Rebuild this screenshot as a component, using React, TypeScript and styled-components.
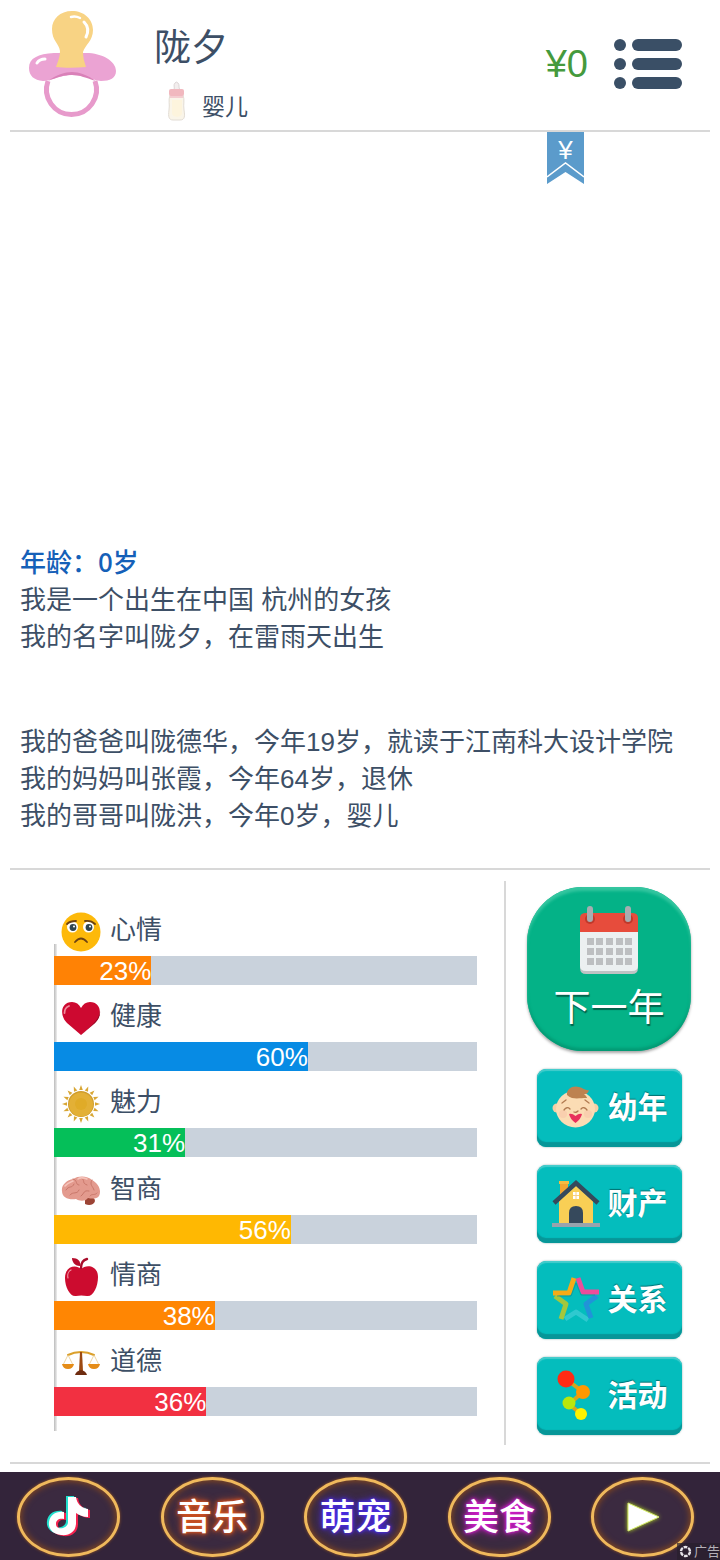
import React from "react";
import styled, { createGlobalStyle } from "styled-components";

const GlobalStyle = createGlobalStyle`
  * {
    box-sizing: border-box;
  }

  body {
    margin: 0;
    background-color: #fff;
    color: #3d4f66;
    font-family: "Liberation Sans", "Noto Sans CJK SC", sans-serif;
  }

  h1, h2, p {
    margin: 0;
  }

  button {
    padding: 0;
    border: none;
    font-family: inherit;
    cursor: pointer;
  }

  svg {
    display: block;
    flex-shrink: 0;
  }
`;

const Page = styled.div`
  display: flex;
  flex-direction: column;
  min-height: 100vh;
`;

const Header = styled.header`
  display: flex;
  align-items: center;
  height: 132px;
  margin: 0 10px;
  padding: 0 28px 2px 16px;
  border-bottom: 2px solid #d8d8d8;
`;

const Profile = styled.div`
  display: flex;
  flex-direction: column;
  gap: 8px;
  flex: 1;
  padding: 18px 0 0 36px;
`;

const Name = styled.h1`
  font-size: 37px;
  line-height: 48px;
  font-weight: 400;
`;

const Stage = styled.div`
  display: flex;
  align-items: flex-end;
  gap: 15px;
  padding-left: 12px;
  font-size: 23px;
  line-height: 28px;
`;

const Money = styled.span`
  margin-right: 26px;
  font-size: 38px;
  line-height: 48px;
  color: #459a3d;
`;

const MenuButton = styled.button`
  background: none;
`;

const Log = styled.main`
  display: flex;
  flex-direction: column;
  flex: 1;
  margin: 0 10px;
  padding: 0 10px 33px;
  border-bottom: 2px solid #d8d8d8;
`;

const RibbonButton = styled.button`
  align-self: flex-end;
  margin-right: 116px;
  background: none;
`;

const Story = styled.section`
  margin-top: auto;
  font-size: 26px;
  line-height: 37px;
`;

const Age = styled.h2`
  padding-bottom: 6px;
  font-family: "Noto Sans CJK SC", sans-serif;
  font-size: 26px;
  line-height: 31px;
  font-weight: 500;
  color: #1560b8;
`;

const Family = styled.div`
  margin-top: 68px;
`;

const Panel = styled.section`
  display: flex;
  margin: 0 10px;
  padding: 11px 0 17px;
  border-bottom: 2px solid #d8d8d8;
`;

const Stats = styled.div`
  position: relative;
  display: flex;
  flex-direction: column;
  justify-content: space-between;
  flex: 1;
  padding: 31px 27px 29px 44px;
  border-right: 2px solid #d8d8d8;

  &::before {
    content: "";
    position: absolute;
    top: 63px;
    bottom: 14px;
    left: 44px;
    width: 3px;
    background: linear-gradient(90deg, #bbb, #eee);
  }
`;

const StatLabel = styled.div`
  display: flex;
  align-items: center;
  gap: 9px;
  margin-bottom: 4px;
  padding-left: 7px;
  font-size: 26px;
  line-height: 36px;

  span {
    padding-bottom: 4px;
  }
`;

const Track = styled.div`
  position: relative;
  height: 29px;
  background-color: #c9d2dc;
`;

const Fill = styled.div<{ $color: string }>`
  height: 100%;
  background-color: ${({ $color }) => $color};
  color: #fff;
  font-size: 26px;
  line-height: 31px;
  text-align: right;
`;

const Actions = styled.nav`
  display: flex;
  flex-direction: column;
  align-items: center;
  gap: 18px;
  width: 206px;
  margin-right: -2px;
  padding: 6px 0 10px;
`;

const NextYearButton = styled.button`
  display: flex;
  flex-direction: column;
  align-items: center;
  gap: 10px;
  width: 164px;
  height: 164px;
  padding-top: 18px;
  border-radius: 56px;
  background-color: #04b287;
  box-shadow: inset 0 4px 3px #35c6a0, inset 0 -3px 3px #039a74,
    0 2px 3px rgba(0, 0, 0, 0.35);
  color: #fff;
  font-size: 37px;
  line-height: 48px;
  text-shadow: 1px 2px 1px rgba(0, 0, 0, 0.45);
`;

const ActionButton = styled.button`
  display: flex;
  align-items: center;
  gap: 8px;
  width: 145px;
  height: 78px;
  padding: 0 0 2px 15px;
  border-radius: 9px;
  background-color: #04bdbd;
  box-shadow: inset 0 -5px 1px #079698, inset 0 2px 1px #45cdcd,
    0 0 2px rgba(0, 80, 80, 0.5);
  color: #fff;
  font-size: 30px;
  font-weight: 700;
  white-space: nowrap;
  text-shadow: 0 -1px 1px rgba(0, 60, 60, 0.6);

  span {
    padding-bottom: 4px;
  }
`;

const AdBar = styled.footer`
  position: relative;
  display: flex;
  align-items: center;
  justify-content: space-between;
  height: 88px;
  margin-top: 8px;
  padding: 2px 26px 0 17px;
  background-color: #33243a;
`;

const AdLink = styled.a<{ $glow?: string }>`
  display: flex;
  align-items: center;
  justify-content: center;
  width: 103px;
  height: 80px;
  border: 3px solid #f0b95c;
  border-radius: 50%;
  background-color: #3b2a40;
  box-shadow: inset 0 0 6px 1px #8a4a1c, 0 0 3px #9a5a24;
  color: #fff;
  font-size: 36px;
  font-weight: 500;
  white-space: nowrap;
  text-decoration: none;
  text-shadow: ${({ $glow }) =>
    $glow ? `0 0 3px ${$glow}, 0 0 5px ${$glow}, 0 0 8px ${$glow}` : "none"};

  span {
    padding-bottom: 7px;
  }
`;

const AdTag = styled.span`
  position: absolute;
  right: 0;
  bottom: 0;
  display: flex;
  align-items: center;
  gap: 2px;
  padding-left: 2px;
  background-color: rgba(40, 32, 44, 0.7);
  color: #b5b0b8;
  font-size: 13px;
  line-height: 17px;
`;

const Pacifier = () => (
  <svg width="92" height="108" viewBox="0 0 92 108">
    <path
      d="M22 71A25 25 0 1 0 69 71"
      fill="none"
      stroke="#e79acb"
      strokeWidth="5"
    />
    <path
      d="M3 58C3 48 12 44 28 43H60C76 43 90 51 90 61C90 68 84 71 75 71C66 70 59 65 46 65C33 65 26 71 17 71C8 70 3 66 3 58Z"
      fill="#eba3d3"
    />
    <path
      d="M22 71C30 65 39 62 46 62S61 65 70 71C60 68 54 65 46 65S32 67 22 71Z"
      fill="#d981b8"
    />
    <path
      d="M46 1C34 1 26 9 26 19C26 31 33 33 34 41C34 47 32 51 30 57C38 58 50 58 60 57C58 51 57 47 57 42C59 35 67 31 67 20C67 9 58 1 46 1Z"
      fill="#f8d384"
    />
    <path
      d="M58 12C62 16 63 21 60 27"
      fill="none"
      stroke="#fff"
      strokeWidth="3"
      strokeLinecap="round"
    />
    <path
      d="M45 7C49 6 52 7 54 8"
      fill="none"
      stroke="#fff"
      strokeWidth="2.5"
      strokeLinecap="round"
    />
    <path
      d="M11 53C13 50 16 49 19 49"
      fill="none"
      stroke="#fff"
      strokeWidth="3"
      strokeLinecap="round"
    />
  </svg>
);

const Bottle = () => (
  <svg width="21" height="40" viewBox="0 0 21 40">
    <path d="M8 9C9 6 7 4 9 2Q10 0 12 2C14 4 12 6 14 9Z" fill="#f3eeee" stroke="#ddd6d6" />
    <path d="M4 14C2 20 4 23 3 29C2 36 3 39 7 39H14C19 39 19 35 18 29C17 23 19 19 17 14Z" fill="#faf5e9" stroke="#e2dcd4" />
    <path d="M6 19H16V32C16 37 6 37 6 32Z" fill="#fdf4dd" />
    <rect x="3" y="8" width="15" height="7" rx="2" fill="#f1b8bf" />
    <path d="M4 16H17" stroke="#f4cdd1" strokeWidth="2" />
  </svg>
);

const MenuIcon = () => (
  <svg width="68" height="50" viewBox="0 0 68 50" fill="#3a4f66">
    {[6, 25, 44].map((y) => (
      <g key={y}>
        <circle cx="6" cy={y} r="6" />
        <rect x="18" y={y - 6} width="50" height="12" rx="6" />
      </g>
    ))}
  </svg>
);

const Ribbon = () => (
  <svg width="37" height="52" viewBox="0 0 37 52">
    <path d="M0 0H37V52L18.5 40L0 52Z" fill="#5b9bcb" />
    <path d="M0 45L18.5 31L37 45" fill="none" stroke="#fff" strokeWidth="1.5" />
    <text
      x="18.5"
      y="27"
      fill="#fff"
      fontFamily="Liberation Sans, sans-serif"
      fontSize="26"
      textAnchor="middle"
    >
      ¥
    </text>
  </svg>
);

const SadFace = () => (
  <svg width="40" height="40" viewBox="0 0 40 40">
    <circle cx="20" cy="20" r="19.5" fill="#fdb90a" />
    <circle cx="11.5" cy="15" r="5.5" fill="#fff" />
    <circle cx="27.5" cy="15" r="5.5" fill="#fff" />
    <circle cx="12" cy="15.5" r="3.4" fill="#2e4450" />
    <circle cx="28" cy="15.5" r="3.4" fill="#2e4450" />
    <circle cx="13" cy="14.5" r="1" fill="#fff" />
    <circle cx="29" cy="14.5" r="1" fill="#fff" />
    <path
      d="M6 12Q9 9 15 9M24 9Q30 8 34 12M14 30Q20 23 26 30"
      fill="none"
      stroke="#6b4213"
      strokeWidth="1.8"
      strokeLinecap="round"
    />
  </svg>
);

const Heart = () => (
  <svg width="40" height="40" viewBox="0 0 40 40">
    <path
      d="M20 37L6 25C-2 17 0 4 11 4C15 4 18 6 20 10C22 6 25 4 29 4C40 4 42 17 34 25Z"
      fill="#cd0930"
    />
    <path d="M20 37L34 25C38 21 39.500 17 39 13C38 22 30 28 20 37Z" fill="#8e0b25" />
    <path
      d="M3.500 15C3.500 11 5.500 9 8 8"
      fill="none"
      stroke="#f08a9c"
      strokeWidth="1.8"
      strokeLinecap="round"
    />
  </svg>
);

const Sun = () => (
  <svg width="40" height="40" viewBox="0 0 40 40">
    {Array.from({ length: 16 }, (_, i) => (
      <path
        key={i}
        d="M18.2 6L20 1L21.8 6Z"
        fill="#d8a634"
        transform={`rotate(${i * 22.5} 20 20)`}
      />
    ))}
    <circle cx="20" cy="20" r="13" fill="#cf9d2c" />
    <circle cx="20" cy="20.500" r="12" fill="#e3b036" />
    <circle cx="20" cy="20" r="6" fill="#e0ab28" />
  </svg>
);

const Brain = () => (
  <svg width="40" height="40" viewBox="0 0 40 40">
    <path d="M24 27C29 25 34 26 34 30C33 34 28 35 24 33Z" fill="#9c4435" />
    <path
      d="M1 20C0 14 6 9 12 8C18 4 27 5 31 9C37 12 41 19 38 25C36 28 31 28 27 27C24 31 18 30 15 28C8 29 1 27 1 20Z"
      fill="#e39a8e"
    />
    <path
      d="M5 19C8 14 11 18 13 13M12 8C17 9 14 14 18 14M20 7C25 9 20 12 26 14M31 9C28 14 32 15 33 19M9 24C12 20 16 24 18 19M20 25C24 22 22 19 28 20M29 25C31 22 34 25 36 22"
      fill="none"
      stroke="#c9776a"
      strokeWidth="1"
      strokeLinecap="round"
    />
    <path
      d="M4 15C7 11 10 11 12 10M17 8C19 6 24 7 26 8"
      fill="none"
      stroke="#f5c3ba"
      strokeWidth="1.6"
      strokeLinecap="round"
    />
  </svg>
);

const Apple = () => (
  <svg width="40" height="40" viewBox="0 0 40 40">
    <path
      d="M20 12C25 7 37 8 37 20C37 30 32 40 26 39Q20 38 15 39C9 40 4 30 4 21C4 9 15 7 20 12Z"
      fill="#cc0c2f"
    />
    <path
      d="M20 11C20 6 22 3 26 2"
      fill="none"
      stroke="#a80d2b"
      strokeWidth="2.4"
      strokeLinecap="round"
    />
    <path d="M19 9C13 9 11 4 11 1C17 1 20 4 19 9Z" fill="#b50b2a" />
    <path
      d="M7 21C6 17 8 14 10 13"
      fill="none"
      stroke="#f090a0"
      strokeWidth="1.2"
      strokeLinecap="round"
    />
  </svg>
);

const Scales = () => (
  <svg width="40" height="40" viewBox="0 0 40 40">
    <path
      d="M7 12Q13 9 20 9T33 12"
      fill="none"
      stroke="#dba02b"
      strokeWidth="2"
      strokeLinecap="round"
    />
    <path
      d="M7 12L2 22M7 12L12 22M33 12L28 22M33 12L38 22"
      stroke="#e7c98c"
      strokeWidth="0.8"
    />
    <path d="M1 21H13Q12 26 7 26T1 21ZM27 21H39Q38 26 33 26T27 21Z" fill="#e58c17" />
    <path d="M19 9H21L22 28H18Z" fill="#9c4a12" />
    <path d="M14 32Q15 28 20 27Q25 28 26 32Z" fill="#6e2c10" />
  </svg>
);

const Calendar = () => (
  <svg width="60" height="70" viewBox="0 0 60 70">
    <path d="M1 20H59V63Q59 69 53 69H7Q1 69 1 63Z" fill="#bfc3c4" />
    <path d="M1 20H59V61Q59 66 53 66H7Q1 66 1 61Z" fill="#ecf0f1" />
    <path d="M1 27V13Q1 8 7 8H53Q59 8 59 13V27Z" fill="#e74c3c" />
    <circle cx="11" cy="14" r="5" fill="#c0392b" />
    <circle cx="49" cy="14" r="5" fill="#c0392b" />
    <rect x="8" y="1" width="6" height="16" rx="3" fill="#a7adb0" />
    <rect x="46" y="1" width="6" height="16" rx="3" fill="#a7adb0" />
    {[33, 43, 53].map((y) =>
      [8, 17, 27, 37, 46].map((x) => (
        <rect key={`${x}-${y}`} x={x} y={y} width="7" height="7" fill="#bdbfc1" />
      ))
    )}
  </svg>
);

const Baby = () => (
  <svg width="48" height="48" viewBox="0 0 48 48">
    <circle cx="5" cy="25" r="4.5" fill="#f6cfa5" />
    <circle cx="42" cy="25" r="4.5" fill="#f6cfa5" />
    <ellipse cx="23.5" cy="26" rx="19.5" ry="18.5" fill="#fbdcb4" />
    <circle cx="11" cy="31" r="4" fill="#f9cfae" />
    <circle cx="36" cy="31" r="4" fill="#f9cfae" />
    <path
      d="M15 12C14 5 22 2 27 4C31 5 34 8 37 7C36 11 34 11 32 11C34 13 35 14 35 15C29 15 25 16 20 15Q17 14 15 12Z"
      fill="#bd8250"
    />
    <path
      d="M10 20L14 17M37 20L33 17M12 27Q15 23 18 26M29 26Q32 23 35 27M22 29Q24 30 26 28"
      fill="none"
      stroke="#b07a50"
      strokeWidth="1.3"
      strokeLinecap="round"
    />
    <path d="M17 31Q20 30 23.5 33Q27 30 30 31Q29 36 23.5 40Q18 36 17 31Z" fill="#e8305c" />
  </svg>
);

const House = () => (
  <svg width="48" height="50" viewBox="0 0 48 50">
    <path d="M8 5H16V15L8 20Z" fill="#f2a531" />
    <path d="M7 3H17V6H7Z" fill="#f6bb42" />
    <path d="M7 23L24 7L41 23V46H7Z" fill="#f9cf55" />
    <path
      d="M2 25L24 5L46 25"
      fill="none"
      stroke="#36495c"
      strokeWidth="4.5"
    />
    <path d="M17 46V35Q17 28 24 28T31 35V46Z" fill="#36495c" />
    <path d="M21 14H27V21H21Z" fill="#fff" />
    <path d="M24 14V21M21 17.5H27" stroke="#f6cf83" />
    <path d="M0 45H48V49H0Z" fill="#98a3ad" />
  </svg>
);

const Star = () => (
  <svg
    width="48"
    height="48"
    viewBox="0 0 48 48"
    fill="none"
    strokeWidth="5"
    strokeLinejoin="round"
  >
    <path d="M13 44L24 37L36 45" stroke="#2fc9cf" />
    <path d="M3 21L14 29L9 44" stroke="#a4c73c" />
    <path d="M45 21L34 29L39 43" stroke="#2193d8" />
    <path d="M1 18H17L22 3" stroke="#f7ab17" />
    <path d="M26 3L31 17H47" stroke="#ec4d9b" />
    <path d="M5 21H19L24 8L29 20H43" stroke="#19868a" strokeWidth="1" opacity="0.6" />
  </svg>
);

const Activity = () => (
  <svg width="48" height="52" viewBox="0 0 48 52">
    <path
      d="M14 10L31 23L17 35L29 45"
      fill="none"
      stroke="#d4a51c"
      strokeWidth="4"
    />
    <circle cx="14" cy="10" r="8.5" fill="#ff2b14" />
    <circle cx="31" cy="23" r="7" fill="#ff9800" />
    <circle cx="17" cy="34" r="6.5" fill="#b9e60c" />
    <circle cx="29" cy="45" r="6" fill="#fff200" />
  </svg>
);

const notePath =
  "M22 1H30C31 8 35 12 42 13V21C37 21 33 19 30 17V27C30 36 23 40 15 39C7 38 2 33 3 26C4 19 10 15 18 16V23C13 22 10 24 10 28C10 32 14 33 17 32C20 31 22 29 22 26Z";

const MusicNote = () => (
  <svg width="46" height="42" viewBox="0 0 46 42">
    <path d={notePath} fill="#22e0cf" transform="translate(-2 -1)" />
    <path d={notePath} fill="#f5224f" transform="translate(2 1)" />
    <path d={notePath} fill="#fff" />
  </svg>
);

const GlowSvg = styled.svg`
  filter: drop-shadow(0 0 2px #b2d622);
`;

const PlayIcon = () => (
  <GlowSvg width="42" height="38" viewBox="0 0 42 38">
    <path
      d="M6 5L37 19L6 33Z"
      fill="#fff"
      stroke="#d6ec6e"
      strokeWidth="1"
    />
  </GlowSvg>
);

const AdMark = () => (
  <svg width="13" height="13" viewBox="0 0 13 13">
    <circle
      cx="6.5"
      cy="6.5"
      r="4.5"
      fill="none"
      stroke="#e8e5ea"
      strokeWidth="2.4"
      strokeDasharray="3.7 1"
    />
  </svg>
);

const stats = [
  { label: "心情", value: 23, color: "#ff8205", icon: <SadFace /> },
  { label: "健康", value: 60, color: "#078be4", icon: <Heart /> },
  { label: "魅力", value: 31, color: "#05bf59", icon: <Sun /> },
  { label: "智商", value: 56, color: "#ffb802", icon: <Brain /> },
  { label: "情商", value: 38, color: "#ff8603", icon: <Apple /> },
  { label: "道德", value: 36, color: "#f23041", icon: <Scales /> },
];

const actions = [
  { label: "幼年", icon: <Baby /> },
  { label: "财产", icon: <House /> },
  { label: "关系", icon: <Star /> },
  { label: "活动", icon: <Activity /> },
];

const App: React.FC = () => {
  return (
    <>
      <GlobalStyle />
      <Page>
        <Header>
          <Pacifier />
          <Profile>
            <Name>陇夕</Name>
            <Stage>
              <Bottle />
              婴儿
            </Stage>
          </Profile>
          <Money>¥0</Money>
          <MenuButton type="button" aria-label="菜单">
            <MenuIcon />
          </MenuButton>
        </Header>
        <Log>
          <RibbonButton type="button">
            <Ribbon />
          </RibbonButton>
          <Story>
            <Age>年龄：0岁</Age>
            <p>我是一个出生在中国 杭州的女孩</p>
            <p>我的名字叫陇夕，在雷雨天出生</p>
            <Family>
              <p>我的爸爸叫陇德华，今年19岁，就读于江南科大设计学院</p>
              <p>我的妈妈叫张霞，今年64岁，退休</p>
              <p>我的哥哥叫陇洪，今年0岁，婴儿</p>
            </Family>
          </Story>
        </Log>
        <Panel>
          <Stats>
            {stats.map(({ label, value, color, icon }) => (
              <div key={label}>
                <StatLabel>
                  {icon}
                  <span>{label}</span>
                </StatLabel>
                <Track
                  role="progressbar"
                  aria-label={label}
                  aria-valuenow={value}
                >
                  <Fill $color={color} style={{ width: `${value}%` }}>
                    {value}%
                  </Fill>
                </Track>
              </div>
            ))}
          </Stats>
          <Actions>
            <NextYearButton type="button">
              <Calendar />
              下一年
            </NextYearButton>
            {actions.map(({ label, icon }) => (
              <ActionButton type="button" key={label}>
                {icon}
                <span>{label}</span>
              </ActionButton>
            ))}
          </Actions>
        </Panel>
        <AdBar>
          <AdLink href="#douyin" aria-label="抖音">
            <MusicNote />
          </AdLink>
          <AdLink href="#music" $glow="#e0561e">
            <span>音乐</span>
          </AdLink>
          <AdLink href="#pets" $glow="#4a2cf0">
            <span>萌宠</span>
          </AdLink>
          <AdLink href="#food" $glow="#d21ccc">
            <span>美食</span>
          </AdLink>
          <AdLink href="#play" aria-label="播放">
            <PlayIcon />
          </AdLink>
          <AdTag>
            <AdMark />
            广告
          </AdTag>
        </AdBar>
      </Page>
    </>
  );
};

export default App;
